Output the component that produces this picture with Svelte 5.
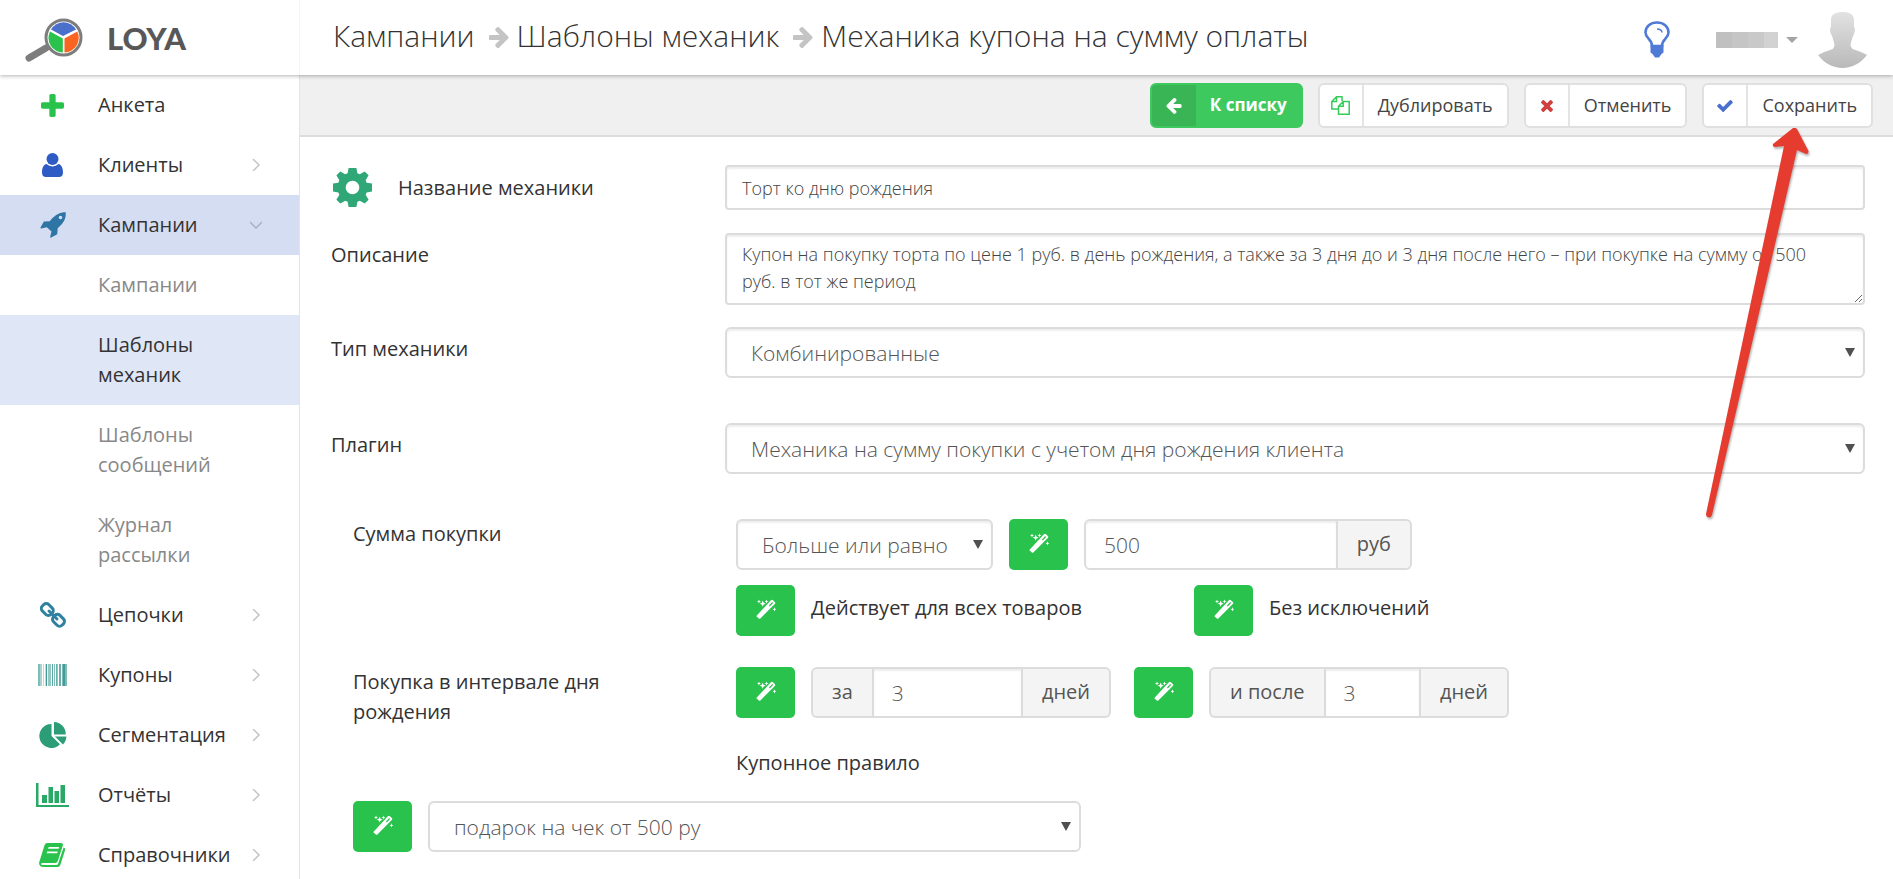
<script>
  const menu = [
    { name: 'Анкета', icon: 'plus', color: '#28c24c' },
    { name: 'Клиенты', icon: 'user', color: '#2f5bc4', more: true },
    {
      name: 'Кампании',
      icon: 'rocket',
      color: '#2e75a6',
      more: true,
      open: true,
      children: [
        { name: 'Кампании' },
        { name: 'Шаблоны механик', active: true },
        { name: 'Шаблоны сообщений' },
        { name: 'Журнал рассылки' }
      ]
    },
    { name: 'Цепочки', icon: 'chain', color: '#2f819f', more: true },
    { name: 'Купоны', icon: 'barcode', color: '#2c8f88', more: true },
    { name: 'Сегментация', icon: 'pie', color: '#2c9d76', more: true },
    { name: 'Отчёты', icon: 'chart', color: '#2aa866', more: true },
    { name: 'Справочники', icon: 'book', color: '#28c24c', more: true }
  ];

  // [x, width, opacity] of every bar in the barcode icon
  const bars = [
    [0, 2, 0.6], [2, 2, 0.4], [5, 1, 0.3], [7, 1, 0.3], [8, 1, 0.9], [10, 3, 0.5],
    [14, 1, 0.8], [16, 1, 0.6], [18, 1, 0.7], [19, 1, 0.5], [21, 2, 0.7], [24, 1, 0.6],
    [25, 2, 0.9], [27, 2, 0.6]
  ];

  let mechanic = $state({
    name: 'Торт ко дню рождения',
    description:
      'Купон на покупку торта по цене 1 руб. в день рождения, а также за 3 дня до и 3 дня после него – при покупке на сумму от 500 руб. в тот же период',
    type: 'Комбинированные',
    plugin: 'Механика на сумму покупки с учетом дня рождения клиента',
    compare: 'Больше или равно',
    sum: '500',
    before: '3',
    after: '3',
    rule: 'подарок на чек от 500 ру'
  });
</script>

{#snippet wand(title)}
  <button class="wand" type="button" aria-label={title}>
    <svg width="20" height="20" viewBox="0 0 20 20" fill="#fff">
      <path d="M.8 16.600 14.900 1.200q1-1 2 0l1.900 1.700q1 1 0 2L4.600 19.200q-1 1-2 0L.8 17.800q-.6-.6 0-1.200z" />
      <path d="m13 6.600 3.200-3.500.9.900-3.300 3.400z" fill="#28c24c" />
      <path d="m3 .4.6 1.500 1.500.6-1.500.6L3 4.600l-.6-1.500-1.500-.6 1.500-.6zM6.700 1.600l.9 2.200 2.200.9-2.200.9-.9 2.200-.9-2.200-2.200-.9 2.200-.9zM10.500.4l.6 1.500 1.500.6-1.500.6-.6 1.500-.6-1.500-1.500-.6 1.500-.6zM18.500 8.300l.6 1.500 1.300.6-1.300.6-.6 1.500-.6-1.500-1.300-.6 1.300-.6z" />
    </svg>
  </button>
{/snippet}

{#snippet crumbArrow()}
  <svg width="20" height="21" viewBox="192 181 1408 1558" fill="#c4c4c4"><path d="M1600 960q0 54-37 91l-651 651q-39 37-91 37-51 0-90-37l-75-75q-38-38-38-91t38-91l293-293h-704q-52 0-84.500-37.500t-32.500-90.500v-128q0-53 32.500-90.500t84.500-37.500h704l-293-294q-38-36-38-90t38-90l75-75q38-38 90-38 53 0 91 38l651 651q37 35 37 90z" /></svg>
{/snippet}

{#snippet icon(name)}
  {#if name === 'plus'}
    <svg width="23" height="23" viewBox="192 128 1408 1408"><path d="M1600 736v192q0 40-28 68t-68 28h-416v416q0 40-28 68t-68 28h-192q-40 0-68-28t-28-68v-416h-416q-40 0-68-28t-28-68v-192q0-40 28-68t68-28h416v-416q0-40 28-68t68-28h192q40 0 68 28t28 68v416h416q40 0 68 28t28 68z" /></svg>
  {:else if name === 'user'}
    <svg width="21" height="24" viewBox="0 0 21 24"><circle cx="10.500" cy="6" r="6" /><path d="M4.500 11q2.500 2.400 6 2.400t6-2.400c3 .6 4.500 4 4.500 8.500 0 3-1.500 4.500-4 4.500H4c-2.500 0-4-1.500-4-4.500C0 15 1.500 11.600 4.500 11z" /></svg>
  {:else if name === 'rocket'}
    <svg width="26" height="26" viewBox="0 0 26 26"><path fill-rule="evenodd" d="M25.700.2c.5 6.200-1.700 10.600-7.200 15.300l-.8.7-.4 5.400c0 .4-.2.6-.5.800l-5.600 3.200c-.6.300-1.200-.2-1-.8l1.300-5.200-4.700-4.400-5.400 1.300c-.6.200-1.200-.4-.9-1l3.100-5.500c.2-.4.500-.5.900-.5l5.300-.3.700-.9C15.400 2.600 19.600.2 25.700.2zM20.500 3.700a1.800 1.800 0 1 0 0 3.600 1.800 1.800 0 0 0 0-3.600z" /></svg>
  {:else if name === 'chain'}
    <svg width="26" height="26" viewBox="0 0 26 26" fill="none" stroke="currentColor" stroke-width="3">
      <rect x="1.300" y="3" width="12" height="9" rx="3.500" transform="rotate(45 7.300 7.500)" />
      <rect x="12.500" y="13.800" width="12" height="9" rx="3.500" transform="rotate(45 18.500 18.300)" />
      <path d="m9 9 8 8" stroke-linecap="round" />
    </svg>
  {:else if name === 'barcode'}
    <svg width="29" height="22" viewBox="0 0 29 22">
      {#each bars as [x, width, opacity]}
        <rect {x} {width} {opacity} y="0" height="22" />
      {/each}
    </svg>
  {:else if name === 'pie'}
    <svg width="28" height="26" viewBox="0 0 28 26"><path d="M12.500 2v12l8.500 8.300A12 12 0 1 1 12.500 2zM15 0a12 12 0 0 1 11.700 12.500H15zM16 14.500h11.400a12 12 0 0 1-3.500 8z" /></svg>
  {:else if name === 'chart'}
    <svg width="33" height="24" viewBox="0 0 33 24"><path d="M0 0h2.500v22H33v2H0zM6 12h5v8H6zM12.500 4H17v16h-4.500zM18.500 8H23v12h-4.500zM24.500 2H29v18h-4.500z" /></svg>
  {:else if name === 'book'}
    <svg width="27" height="24" viewBox="0 0 27 24"><path fill-rule="evenodd" d="M8.500 0H22q2.500 0 1.800 2.500L18.800 18q-.6 2-2.800 2H3.500q-1.300 0-1.400 1t1.400 1h14q1.200 0 1.600-1.300L24.600 4.500q2 .6 1.400 2.700l-4.600 14.500q-.8 2.300-3 2.300H4q-2.700 0-3.600-2.300-.6-1.700.2-3.700L5.500 2.300Q6.200 0 8.500 0zM9.700 4l-.6 1.800h10.500l.6-1.800zM8.300 8.500l-.6 1.800h10.500l.6-1.800z" /></svg>
  {/if}
{/snippet}

<div class="app">
  <header>
    <a class="logo" href="#home">
      <svg width="58" height="44" viewBox="0 0 58 44">
        <path d="M4 40 21 30" stroke="#7d7d7d" stroke-width="7" stroke-linecap="round" />
        <circle cx="38.500" cy="19.500" r="17.500" fill="#fff" stroke="#7d7d7d" stroke-width="3" />
        <path d="M38 18 26 11.500a14.500 14.500 0 0 1 25 0z" fill="#4a70cc" />
        <path d="M37.800 20.500v14A14.500 14.500 0 0 1 25 13.500z" fill="#28c24c" />
        <path d="M39.500 20.500v14A14.500 14.500 0 0 0 52.200 13.500z" fill="#fb6522" />
      </svg>
      <span>LOYA</span>
    </a>
    <nav class="crumbs">
      <a href="#campaigns">Кампании</a>
      {@render crumbArrow()}
      <a href="#templates">Шаблоны механик</a>
      {@render crumbArrow()}
      <span>Механика купона на сумму оплаты</span>
    </nav>
    <div class="account">
      <button class="tips" type="button" aria-label="Подсказки">
        <svg width="26" height="37" viewBox="0 0 26 37" fill="none" stroke="#4f7ad6" stroke-width="2.600">
          <path d="M8 25C8 18 1.500 17.500 1.500 11.500 1.500 5.500 6.500 1.500 13 1.500s11.500 4 11.500 10C24.500 17.500 18 18 18 25z" />
          <path d="M13 8q4.500 0 5 3.500" stroke-width="1.500" />
          <path d="M6.500 24h13v7.500L17.500 33 15 36.500h-4L8.500 33l-2-1.500z" fill="#4f7ad6" stroke="none" />
        </svg>
      </button>
      <button class="user" type="button" aria-label="Профиль">
        <span class="username"><i></i><i></i><i></i><i></i></span>
        <span class="caret"></span>
        <svg width="49" height="56" viewBox="0 0 49 56">
          <defs>
            <linearGradient id="avatar" x1="0" y1="0" x2="0" y2="1">
              <stop offset="0" stop-color="#e2e2e2" />
              <stop offset="1" stop-color="#b9b9b9" />
            </linearGradient>
          </defs>
          <path fill="url(#avatar)" d="M24.500 0C31 0 36 2 36 8v7c1.500 1 1 6-.8 8.500-1 2-1 3.500-2 6l-.7 3.500c1 4 3 4.500 7 5.700 4 1.200 7 2.800 9.500 4.300C43 51 34 56 24.500 56S6 51 0 43c3-1.500 6-3.100 10-4.300 4-1.200 6-1.700 6.500-5.700l-.7-3.500c-1-2.500-1-4-2-6C12 21 11.500 16 13 15V8c0-6 5-8 11.500-8z" />
        </svg>
      </button>
    </div>
  </header>

  <div class="body">
    <aside>
      {#each menu as item}
        <a class="item" class:open={item.open} href="#menu">
          <span class="icon" style="color: {item.color}">{@render icon(item.icon)}</span>
          <span class="name">{item.name}</span>
          {#if item.more}
            <svg class="more" width="12" height="12" viewBox="0 0 12 12" fill="none" stroke="#c4c4c8" stroke-width="1.500">
              <path d={item.open ? 'm0 3 6 6 6-6' : 'm3 0 6 6-6 6'} />
            </svg>
          {/if}
        </a>
        {#each item.children ?? [] as child}
          <a class="child" class:active={child.active} href="#menu">{child.name}</a>
        {/each}
      {/each}
    </aside>

    <main>
      <div class="toolbar">
        <button class="action primary" type="button">
          <span class="sign"><svg width="16" height="16" viewBox="192 185 1472 1554" fill="#fff"><path d="M1664 896v128q0 53-32.500 90.500t-84.500 37.500h-704l293 294q38 36 38 90t-38 90l-75 76q-37 37-90 37-52 0-91-37l-651-652q-37-37-37-90 0-52 37-91l651-650q38-38 91-38 52 0 90 38l75 74q38 38 38 91t-38 91l-293 293h704q52 0 84.500 37.500t32.500 90.500z" /></svg></span>
          <span class="text">К списку</span>
        </button>
        <button class="action" type="button">
          <span class="sign"><svg width="19" height="19" viewBox="0 0 19 19" fill="none" stroke="#35cc59" stroke-width="1.500"><path d="M7 13H.8V5.500L5.500.8H11V5M5.500.8v4.700H.8M7.500 10.200l4.700-4.700h6v12.700H7.500zM12.200 5.500v4.700H7.500" /></svg></span>
          <span class="text">Дублировать</span>
        </button>
        <button class="action" type="button">
          <span class="sign"><svg width="12" height="12" viewBox="302 366 1188 1188" fill="#d04040"><path d="M1490 1322q0 40-28 68l-136 136q-28 28-68 28t-68-28l-294-294-294 294q-28 28-68 28t-68-28l-136-136q-28-28-28-68t28-68l294-294-294-294q-28-28-28-68t28-68l136-136q28-28 68-28t68 28l294 294 294-294q28-28 68-28t68 28l136 136q28 28 28 68t-28 68l-294 294 294 294q28 28 28 68z" /></svg></span>
          <span class="text">Отменить</span>
        </button>
        <button class="action" type="button">
          <span class="sign"><svg width="16" height="12" viewBox="121 334 1550 1188" fill="#4a6fd0"><path d="M1671 566q0 40-28 68l-724 724-136 136q-28 28-68 28t-68-28l-136-136-362-362q-28-28-28-68t28-68l136-136q28-28 68-28t68 28l294 295 656-657q28-28 68-28t68 28l136 136q28 28 28 68z" /></svg></span>
          <span class="text">Сохранить</span>
        </button>
      </div>

      <form>
        <div class="row">
          <label class="title" for="name">
            <svg width="39" height="39" viewBox="-20 -20 40 40" fill="#2fa776">
              <path fill-rule="evenodd" d="M-4-20H4L5-14.500 7.500-13.500 12.500-16.500 16.500-12.500 13.500-7.500 14.500-5 20-4V4L14.500 5 13.500 7.500 16.500 12.500 12.500 16.500 7.500 13.500 5 14.500 4 20H-4L-5 14.500-7.500 13.500-12.500 16.500-16.500 12.500-13.500 7.500-14.500 5-20 4V-4L-14.500-5-13.500-7.500-16.500-12.500-12.500-16.500-7.500-13.500-5-14.500zM0-7A7 7 0 1 0 0 7 7 7 0 1 0 0-7z" />
            </svg>
            Название механики
          </label>
          <input id="name" class="field small" bind:value={mechanic.name} />
        </div>
        <div class="row about">
          <label for="description">Описание</label>
          <textarea id="description" class="field small" rows="2" bind:value={mechanic.description}></textarea>
        </div>
        <div class="row wide">
          <label for="type">Тип механики</label>
          <div class="select">
            <select id="type" class="field" bind:value={mechanic.type}>
              <option>Комбинированные</option>
            </select>
          </div>
        </div>
        <div class="row wide">
          <label for="plugin">Плагин</label>
          <div class="select">
            <select id="plugin" class="field" bind:value={mechanic.plugin}>
              <option>Механика на сумму покупки с учетом дня рождения клиента</option>
            </select>
          </div>
        </div>

        <div class="row nested">
          <label for="sum">Сумма покупки</label>
          <div class="params">
            <div class="line">
              <div class="select compare">
                <select class="field" aria-label="Условие" bind:value={mechanic.compare}>
                  <option>Больше или равно</option>
                </select>
              </div>
              {@render wand('Изменить условие')}
              <div class="group sum">
                <input id="sum" class="field" bind:value={mechanic.sum} />
                <span class="addon">руб</span>
              </div>
            </div>
            <div class="line">
              <div class="choice">{@render wand('Выбрать товары')}<span>Действует для всех товаров</span></div>
              <div class="choice">{@render wand('Выбрать исключения')}<span>Без исключений</span></div>
            </div>
          </div>
        </div>

        <div class="row nested interval">
          <label for="before">Покупка в интервале дня рождения</label>
          <div class="line periods">
            <div class="line">
              {@render wand('Изменить период до')}
              <div class="group">
                <label class="addon" for="before">за</label>
                <input id="before" class="field" bind:value={mechanic.before} />
                <span class="addon">дней</span>
              </div>
            </div>
            <div class="line">
              {@render wand('Изменить период после')}
              <div class="group">
                <label class="addon" for="after">и после</label>
                <input id="after" class="field" bind:value={mechanic.after} />
                <span class="addon">дней</span>
              </div>
            </div>
          </div>
        </div>

        <div class="row nested rule-title">
          <label for="rule">Купонное правило</label>
        </div>
        <div class="line rule">
          {@render wand('Изменить правило')}
          <div class="select">
            <select id="rule" class="field" bind:value={mechanic.rule}>
              <option>подарок на чек от 500 ру</option>
            </select>
          </div>
        </div>
      </form>
    </main>
  </div>

  <svg class="pointer" width="108" height="396" viewBox="0 0 108 396" aria-hidden="true">
    <path d="M88 0 68 16q-1 3 2 3l9-1L1 386q0 3 3 3.500 2 0 3-2.500L92 22l9 4q3 0 2.500-3L92 1q-2-2-4-1z" fill="#e63c30" />
  </svg>
</div>

<style>
  :global(body) {
    margin: 0;
  }

  .app {
    position: relative;
    display: flex;
    flex-direction: column;
    height: 100vh;
    overflow: hidden;
    font-family: 'Open Sans', 'Noto Sans', sans-serif;
    font-size: 20px;
    line-height: 30px;
    color: #333;
    background: #fff;
  }

  .app :global(*) {
    box-sizing: border-box;
  }

  svg {
    flex: none;
    display: block;
  }

  a {
    color: inherit;
    text-decoration: none;
  }

  button {
    padding: 0;
    border: 0;
    background: none;
    font: inherit;
    color: inherit;
    cursor: pointer;
  }

  header {
    position: relative;
    z-index: 1;
    display: flex;
    flex: none;
    align-items: center;
    height: 75px;
    background: #fff;
    box-shadow: 0 1px 4px rgba(0, 0, 0, 0.3);
  }

  .logo {
    display: flex;
    align-items: center;
    gap: 24px;
    width: 300px;
    height: 75px;
    padding: 5px 0 0 25px;
    border-right: 1px solid #f6f6f6;
    font-family: Lato, sans-serif;
    font-weight: 900;
    font-size: 31px;
    color: #585858;
  }

  .logo span {
    padding-bottom: 4px;
  }

  .crumbs {
    display: flex;
    flex: 1;
    align-items: center;
    gap: 8px;
    padding-left: 33px;
    font-size: 30px;
    font-weight: 300;
    white-space: nowrap;
  }

  .crumbs a,
  .crumbs span {
    padding-bottom: 4px;
  }

  .crumbs svg,
  .crumbs :global(svg) {
    margin-left: 6px;
  }

  .account {
    display: flex;
    align-items: center;
    gap: 46px;
    padding: 4px 26px 0 0;
  }

  .user {
    display: flex;
    align-items: center;
    gap: 8px;
  }

  .user svg {
    margin-left: 12px;
  }

  .username {
    display: flex;
  }

  .username i {
    width: 16px;
    height: 16px;
    background: #c0c0c0;
  }

  .username i:nth-child(2) {
    background: #c5c5c5;
  }

  .username i:nth-child(3) {
    background: #c9c9c9;
  }

  .username i:nth-child(4) {
    width: 14px;
    background: #d2d2d2;
  }

  .caret {
    border: 6px solid transparent;
    border-top-color: #a5a5a5;
    border-bottom: 0;
  }

  .body {
    display: flex;
    flex: 1;
    min-height: 0;
  }

  aside {
    flex: none;
    width: 300px;
    border-right: 1px solid #e4e4e6;
    overflow: hidden;
  }

  .item {
    display: flex;
    align-items: center;
    height: 60px;
    padding-right: 37px;
  }

  .icon {
    display: flex;
    justify-content: center;
    width: 105px;
    margin-right: -7px;
    fill: currentColor;
  }

  .name {
    flex: 1;
  }

  .open {
    background: #d5ddf2;
  }

  .open .more {
    stroke: #a8afc4;
  }

  .child {
    display: block;
    padding: 15px 80px 15px 98px;
    color: #888;
  }

  .active {
    background: #dfe6f6;
    color: #333;
  }

  main {
    flex: 1;
    min-width: 0;
  }

  .toolbar {
    display: flex;
    justify-content: flex-end;
    gap: 15px;
    height: 62px;
    padding: 8px 20px 0 0;
    border-bottom: 2px solid #dcdcdc;
    background: #f0f0f0;
  }

  .action {
    display: flex;
    height: 45px;
    border: 2px solid #e0e0e0;
    border-radius: 6px;
    background: #fff;
    font-size: 18px;
    color: #444;
    overflow: hidden;
  }

  .sign {
    display: flex;
    align-items: center;
    justify-content: center;
    width: 44px;
    height: 100%;
    border-right: 2px solid #e4e4e4;
  }

  .text {
    align-self: center;
    padding: 0 14px 2px;
  }

  .primary {
    border-color: #3ec95f;
    background: #3ec95f;
    font-size: 17px;
    font-weight: 700;
    color: #fff;
  }

  .primary .sign {
    border: 0;
    background: #3ab556;
  }

  form {
    padding: 28px 28px 0 31px;
  }

  .row {
    display: grid;
    grid-template-columns: 394px minmax(0, 1fr);
    align-items: start;
    margin-bottom: 23px;
  }

  .row > label {
    padding-top: 7px;
  }

  .row > .title {
    display: flex;
    align-items: center;
    gap: 26px;
    padding: 3px 0 0 2px;
  }

  .about {
    margin-bottom: 22px;
  }

  .wide {
    margin-bottom: 45px;
  }

  .nested {
    grid-template-columns: 383px minmax(0, 1fr);
    padding-left: 22px;
    margin-bottom: 31px;
  }

  .nested > label {
    padding: 0 100px 0 0;
  }

  .interval {
    margin-bottom: 21px;
  }

  .rule-title {
    margin-bottom: 23px;
  }

  .rule-title > label {
    grid-column: 2;
  }

  .field {
    display: block;
    width: 100%;
    height: 51px;
    padding: 0 18px;
    border: 2px solid #dcdcdc;
    border-radius: 6px;
    outline: none;
    background: #fff;
    box-shadow: inset 0 2px 2px rgba(0, 0, 0, 0.07);
    font: inherit;
    font-size: 21px;
    font-weight: 300;
    color: #555;
  }

  .small {
    height: 45px;
    padding: 0 15px;
    border-radius: 4px;
    font-size: 18px;
    color: #444;
  }

  textarea.field {
    height: 72px;
    padding: 6px 36px 6px 15px;
    line-height: 27px;
    resize: both;
  }

  .select {
    position: relative;
  }

  select.field {
    padding: 0 24px;
    appearance: none;
  }

  .select::after {
    content: '';
    position: absolute;
    top: 21px;
    right: 10px;
    border: 5px solid transparent;
    border-top: 9px solid #505050;
    border-bottom: 0;
    pointer-events: none;
  }

  .params {
    display: grid;
    gap: 15px;
  }

  .line {
    display: flex;
    gap: 16px;
  }

  .periods {
    gap: 23px;
  }

  .compare {
    width: 257px;
  }

  .wand {
    display: flex;
    flex: none;
    align-items: center;
    justify-content: center;
    width: 59px;
    height: 51px;
    padding-bottom: 3px;
    border-radius: 5px;
    background: #28c24c;
  }

  .group {
    display: flex;
    width: 300px;
  }

  .sum {
    width: 328px;
  }

  .group .field {
    flex: 1;
    min-width: 0;
    border-radius: 0;
  }

  .group .field:first-child {
    border-radius: 6px 0 0 6px;
  }

  .addon {
    padding: 8px 19px 0;
    border: 2px solid #dcdcdc;
    background: #f4f4f4;
    color: #555;
    white-space: nowrap;
  }

  .addon:first-child {
    border-right: 0;
    border-radius: 6px 0 0 6px;
  }

  .addon:last-child {
    border-left: 0;
    border-radius: 0 6px 6px 0;
  }

  .choice {
    display: flex;
    gap: 16px;
    width: 442px;
    padding-right: 16px;
  }

  .choice span {
    padding-top: 8px;
  }

  .rule {
    padding-left: 22px;
  }

  .rule .select {
    width: 653px;
  }

  .rule .field {
    box-shadow: none;
  }

  .pointer {
    position: absolute;
    z-index: 2;
    top: 128px;
    right: 80px;
    filter: drop-shadow(1px 2px 1px rgba(0, 0, 0, 0.3));
    pointer-events: none;
  }
</style>
